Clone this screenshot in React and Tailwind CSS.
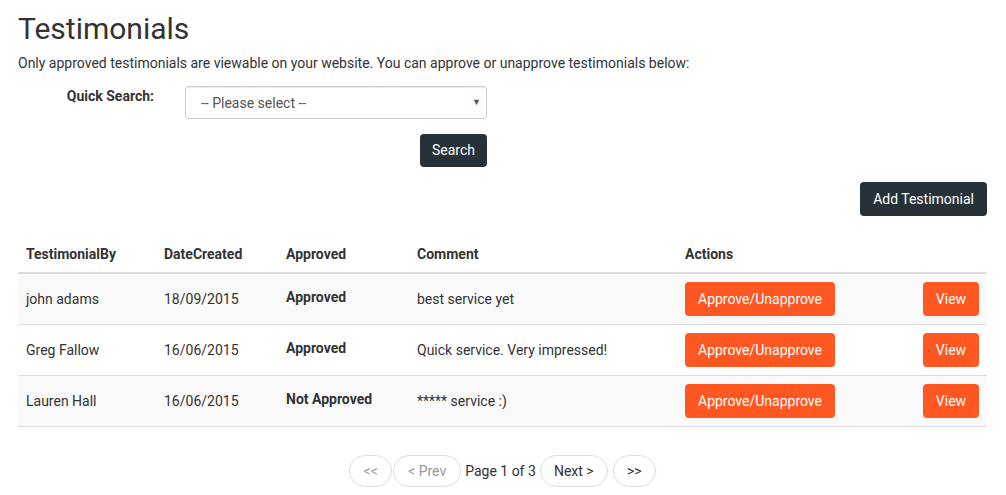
import { useState } from 'react';

const rows = [
    { by: 'john adams', date: '18/09/2015', approved: 'Approved', comment: 'best service yet' },
    { by: 'Greg Fallow', date: '16/06/2015', approved: 'Approved', comment: 'Quick service. Very impressed!' },
    { by: 'Lauren Hall', date: '16/06/2015', approved: 'Not Approved', comment: '***** service :)' },
];

const pageBtn = 'h-[32px] rounded-full border border-[#ddd] bg-white text-[14px] leading-none';

const App = () => {
    const [search, setSearch] = useState('');

    return (
        <main className="w-[1006px] min-h-[495px] bg-white pl-[18px] pt-[12px] text-[14px] text-[#333] font-['Roboto',sans-serif]">
            <div className="w-[969px]">
                <h1 className="text-[30px] leading-[33px] font-normal">Testimonials</h1>
                <p className="mt-[8px] leading-[20px]">Only approved testimonials are viewable on your website. You can approve or unapprove testimonials below:</p>

                <div className="mt-[13px] flex">
                    <label className="w-[136px] text-right font-bold leading-[20px]">Quick Search:</label>
                    <div className="ml-[31px] w-[302px]">
                        <div className="relative">
                            <select
                                value={search}
                                onChange={(e) => setSearch(e.target.value)}
                                className="h-[33px] w-full appearance-none rounded-[4px] border border-[#ccc] bg-white pl-[15px] pt-[2px] text-[14px] text-[#555] shadow-[inset_0_1px_1px_rgba(0,0,0,0.075)]"
                            >
                                <option value="">-- Please select --</option>
                            </select>
                            <span className="pointer-events-none absolute right-[6px] top-[10px] text-[9px] text-[#555]">▼</span>
                        </div>
                        <div className="mt-[15px] flex justify-end">
                            <button className="h-[33px] rounded-[4px] bg-[#263238] px-[12px] text-[14px] text-white">Search</button>
                        </div>
                    </div>
                </div>

                <div className="mt-[15px] flex justify-end">
                    <button className="h-[34px] rounded-[4px] bg-[#263238] px-[13px] text-[14px] text-white">Add Testimonial</button>
                </div>

                <table className="mt-[20px] w-[969px] table-fixed border-collapse">
                    <colgroup>
                        <col className="w-[138px]" />
                        <col className="w-[122px]" />
                        <col className="w-[131px]" />
                        <col className="w-[268px]" />
                        <col className="w-[310px]" />
                    </colgroup>
                    <thead>
                        <tr className="border-b-2 border-[#ddd]">
                            <th className="p-[8px] text-left font-bold leading-[20px]">TestimonialBy</th>
                            <th className="p-[8px] text-left font-bold leading-[20px]">DateCreated</th>
                            <th className="p-[8px] text-left font-bold leading-[20px]">Approved</th>
                            <th className="p-[8px] text-left font-bold leading-[20px]">Comment</th>
                            <th className="p-[8px] text-left font-bold leading-[20px]">Actions</th>
                        </tr>
                    </thead>
                    <tbody>
                        {rows.map((row, i) => (
                            <tr key={row.by} className={`border-b border-[#ddd] ${i % 2 === 0 ? 'bg-[#f9f9f9]' : 'bg-white'}`}>
                                <td className="p-[8px] align-middle leading-[20px]">{row.by}</td>
                                <td className="p-[8px] align-middle leading-[20px]">{row.date}</td>
                                <td className="p-[8px] align-middle leading-[20px]">
                                    <span className="mb-[5px] inline-block font-bold">{row.approved}</span>
                                </td>
                                <td className="p-[8px] align-middle leading-[20px]">{row.comment}</td>
                                <td className="p-[8px] align-middle">
                                    <div className="flex items-center justify-between">
                                        <button className="h-[34px] w-[150px] rounded-[4px] bg-[#ff5722] text-[14px] text-white">Approve/Unapprove</button>
                                        <button className="h-[34px] w-[56px] rounded-[4px] bg-[#ff5722] text-[14px] text-white">View</button>
                                    </div>
                                </td>
                            </tr>
                        ))}
                    </tbody>
                </table>

                <div className="mt-[28px] flex items-center justify-center">
                    <button className={`${pageBtn} w-[43px] text-[#999]`}>&lt;&lt;</button>
                    <button className={`${pageBtn} ml-[1px] w-[68px] text-[#999]`}>&lt; Prev</button>
                    <span className="ml-[4px] mr-[4px]">Page 1 of 3</span>
                    <button className={`${pageBtn} w-[68px] text-[#333]`}>Next &gt;</button>
                    <button className={`${pageBtn} ml-[5px] w-[43px] text-[#333]`}>&gt;&gt;</button>
                </div>
            </div>
        </main>
    );
};

export default App;
